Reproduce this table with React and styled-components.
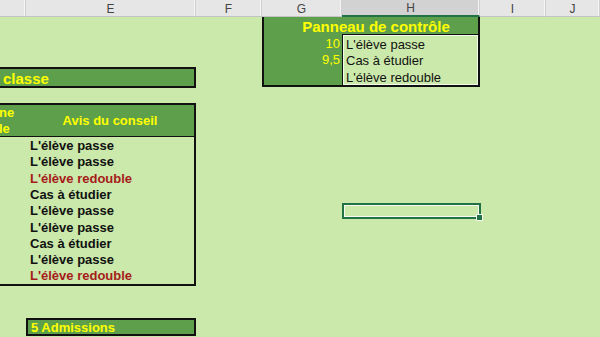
import React from "react";
import styled, { createGlobalStyle } from "styled-components";

const Global = createGlobalStyle`
  body {
    margin: 0;
    background: #cae9aa;
    font-family: "Liberation Sans", Arial, sans-serif;
  }
`;

const Sheet = styled.div`
  display: grid;
  grid-template-columns: 26px 170px 66px 80px 138px 66px 1fr;
  grid-template-rows: 17px 19px 17px 16px 18px 16px 34px repeat(9, 16.4px) 17px 16px 18px 1fr;
  width: 600px;
  height: 337px;
  overflow: hidden;
  background: #cae9aa;
`;

const ColHead = styled.div`
  grid-row: 1;
  display: flex;
  align-items: center;
  justify-content: center;
  font-size: 12px;
  color: #444;
  background: ${(p) => (p.$selected ? "#d2d2d2" : "#e6e6e6")};
  border-right: 1px solid #d0d0d0;
  box-shadow: inset -1px 0 0 #f4f4f4;
  border-bottom: ${(p) => (p.$selected ? "2px solid #217346" : "1px solid #c4c4c4")};
  box-sizing: border-box;
  padding-top: 1px;
`;

const Panel = styled.div`
  grid-column: 4 / 6;
  grid-row: 2 / 6;
  display: grid;
  grid-template-columns: 78px 1fr;
  grid-template-rows: 17px 1fr;
  border: 2px solid #111;
  border-top: none;
  background: #5e9f4c;
  box-sizing: border-box;
`;

const PanelTitle = styled.div`
  grid-column: 1 / 3;
  display: flex;
  align-items: center;
  justify-content: center;
  color: #ffff00;
  font-weight: 700;
  font-size: 15px;
  padding: 1px 0 0 10px;
`;

const Numbers = styled.div`
  display: grid;
  grid-template-rows: 17px 16px 1fr;
`;

const Number = styled.div`
  display: flex;
  align-items: center;
  justify-content: flex-end;
  padding: 1px 2px 0 0;
  color: #ffff00;
  font-size: 13px;
`;

const Choices = styled.div`
  display: grid;
  grid-template-rows: 17px 16px 1fr;
  background: #cae9aa;
  border-left: 1px solid #111;
  border-top: 1px solid #111;
  box-shadow: inset 1px 1px 0 #f2fae8, inset -1px -1px 0 #f2fae8;
`;

const Choice = styled.div`
  display: flex;
  align-items: center;
  padding: 1px 0 0 3px;
  font-size: 13px;
  color: #111;
`;

const ClassBar = styled.div`
  grid-column: 1 / 3;
  grid-row: 5;
  margin: -2px 0 -1px;
  display: flex;
  align-items: center;
  padding: 1px 0 0 3px;
  background: #5e9f4c;
  border: 2px solid #111;
  border-left: none;
  color: #ffff00;
  font-weight: 700;
  font-size: 15px;
`;

const Table = styled.div`
  grid-column: 1 / 3;
  grid-row: 7 / 17;
  display: grid;
  grid-template-rows: 32px repeat(9, 1fr);
  border: 2px solid #111;
  border-left: none;
  margin-bottom: -1px;
`;

const TableHead = styled.div`
  display: grid;
  grid-template-columns: 26px 1fr;
  background: #5e9f4c;
  border-bottom: 1px solid #111;
  color: #ffff00;
  font-weight: 700;
  font-size: 13px;
`;

const HeadCut = styled.div`
  display: flex;
  flex-direction: column;
  justify-content: center;
  line-height: 16px;
  overflow: hidden;
  margin-left: -1px;
`;

const HeadTitle = styled.div`
  display: flex;
  align-items: center;
  justify-content: center;
`;

const Row = styled.div`
  display: flex;
  align-items: center;
  padding: 1px 0 0 30px;
  font-weight: 700;
  font-size: 13px;
  color: ${(p) => (p.$red ? "#a61b1b" : "#111")};
`;

const Admissions = styled.div`
  grid-column: 2;
  grid-row: 19;
  display: flex;
  align-items: center;
  padding: 1px 0 0 3px;
  background: #5e9f4c;
  border: 2px solid #111;
  color: #ffff00;
  font-weight: 700;
  font-size: 13px;
`;

const Selected = styled.div`
  grid-column: 5;
  grid-row: 12;
  position: relative;
  margin: 0 -1px 0 0;
  border: 2px solid #217346;
  box-shadow: inset 0 0 0 1px #f4faee;
`;

const Handle = styled.span`
  position: absolute;
  right: -4px;
  bottom: -4px;
  width: 5px;
  height: 5px;
  background: #217346;
  border: 1px solid #f4faee;
`;

const verdicts = [
  ["L'élève passe", false],
  ["L'élève passe", false],
  ["L'élève redouble", true],
  ["Cas à étudier", false],
  ["L'élève passe", false],
  ["L'élève passe", false],
  ["Cas à étudier", false],
  ["L'élève passe", false],
  ["L'élève redouble", true],
];

const App = () => {
  return (
    <Sheet>
      <Global />
      <ColHead />
      <ColHead>E</ColHead>
      <ColHead>F</ColHead>
      <ColHead>G</ColHead>
      <ColHead $selected>H</ColHead>
      <ColHead>I</ColHead>
      <ColHead>J</ColHead>

      <Panel>
        <PanelTitle>Panneau de contrôle</PanelTitle>
        <Numbers>
          <Number>10</Number>
          <Number>9,5</Number>
          <Number />
        </Numbers>
        <Choices>
          <Choice>L'élève passe</Choice>
          <Choice>Cas à étudier</Choice>
          <Choice>L'élève redouble</Choice>
        </Choices>
      </Panel>

      <ClassBar>classe</ClassBar>

      <Table>
        <TableHead>
          <HeadCut>
            <span>ne</span>
            <span>le</span>
          </HeadCut>
          <HeadTitle>Avis du conseil</HeadTitle>
        </TableHead>
        {verdicts.map(([text, red], i) => (
          <Row key={i} $red={red}>
            {text}
          </Row>
        ))}
      </Table>

      <Selected>
        <Handle />
      </Selected>

      <Admissions>5 Admissions</Admissions>
    </Sheet>
  );
};

export default App;
